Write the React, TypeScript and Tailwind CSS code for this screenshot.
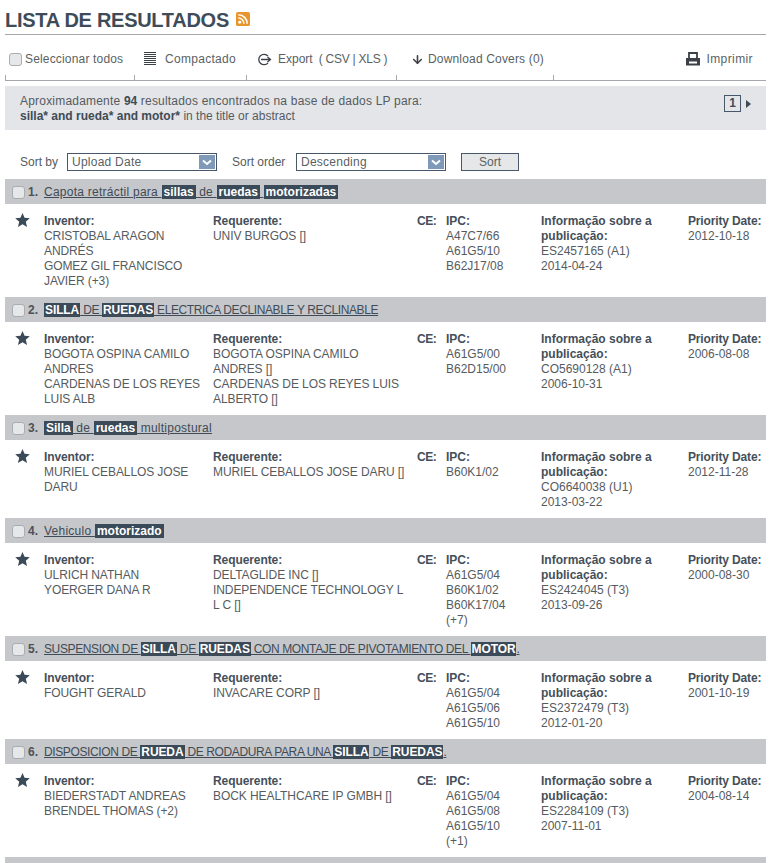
import React from "react";
import { ArrowDown } from "lucide-react";

const results = [
  {
    title: "Capota retráctil para |sillas| de |ruedas| |motorizadas|",
    caps: false,
    inventors: ["CRISTOBAL ARAGON", "ANDRÉS", "GOMEZ GIL FRANCISCO", "JAVIER (+3)"],
    applicants: ["UNIV BURGOS []"],
    ipc: ["A47C7/66", "A61G5/10", "B62J17/08"],
    pub: "ES2457165 (A1)",
    pubDate: "2014-04-24",
    priority: "2012-10-18",
  },
  {
    title: "|SILLA| DE |RUEDAS| ELECTRICA DECLINABLE Y RECLINABLE",
    caps: true,
    inventors: ["BOGOTA OSPINA CAMILO", "ANDRES", "CARDENAS DE LOS REYES", "LUIS ALB"],
    applicants: ["BOGOTA OSPINA CAMILO", "ANDRES []", "CARDENAS DE LOS REYES LUIS", "ALBERTO []"],
    ipc: ["A61G5/00", "B62D15/00"],
    pub: "CO5690128 (A1)",
    pubDate: "2006-10-31",
    priority: "2006-08-08",
  },
  {
    title: "|Silla| de |ruedas| multipostural",
    caps: false,
    inventors: ["MURIEL CEBALLOS JOSE", "DARU"],
    applicants: ["MURIEL CEBALLOS JOSE DARU []"],
    ipc: ["B60K1/02"],
    pub: "CO6640038 (U1)",
    pubDate: "2013-03-22",
    priority: "2012-11-28",
  },
  {
    title: "Vehiculo |motorizado|",
    caps: false,
    inventors: ["ULRICH NATHAN", "YOERGER DANA R"],
    applicants: ["DELTAGLIDE INC []", "INDEPENDENCE TECHNOLOGY L", "L C []"],
    ipc: ["A61G5/04", "B60K1/02", "B60K17/04", "(+7)"],
    pub: "ES2424045 (T3)",
    pubDate: "2013-09-26",
    priority: "2000-08-30",
  },
  {
    title: "SUSPENSION DE |SILLA| DE |RUEDAS| CON MONTAJE DE PIVOTAMIENTO DEL |MOTOR|.",
    caps: true,
    inventors: ["FOUGHT GERALD"],
    applicants: ["INVACARE CORP []"],
    ipc: ["A61G5/04", "A61G5/06", "A61G5/10"],
    pub: "ES2372479 (T3)",
    pubDate: "2012-01-20",
    priority: "2001-10-19",
  },
  {
    title: "DISPOSICION DE |RUEDA| DE RODADURA PARA UNA |SILLA| DE |RUEDAS|.",
    caps: true,
    inventors: ["BIEDERSTADT ANDREAS", "BRENDEL THOMAS (+2)"],
    applicants: ["BOCK HEALTHCARE IP GMBH []"],
    ipc: ["A61G5/04", "A61G5/08", "A61G5/10", "(+1)"],
    pub: "ES2284109 (T3)",
    pubDate: "2007-11-01",
    priority: "2004-08-14",
  },
];

const Check = () => (
  <span className="block w-[13px] h-[13px] rounded-[3px] border border-[#a9adb2] bg-[#e6e7e9]" />
);

const Select = ({ value, width }: { value: string; width: string }) => (
  <div className={`${width} h-[18px] border border-[#46586a] bg-white flex items-center justify-between pl-1 pr-px`}>
    <span className="text-[12px] text-[#5a5f64] tracking-[0.25px] pt-px">{value}</span>
    <span className="w-4 h-[14px] bg-[#7f9ab8] flex items-center justify-center">
      <svg width="10" height="7" viewBox="0 0 10 7">
        <path d="M1 1.5 L5 5 L9 1.5" fill="none" stroke="#fff" strokeWidth="2" />
      </svg>
    </span>
  </div>
);

const Label = ({ children }: { children: React.ReactNode }) => (
  <div className="font-bold text-[#454f59]">{children}</div>
);

export default function App() {
  return (
    <div className="h-[863px] overflow-hidden bg-white font-['Liberation_Sans',Arial,sans-serif] text-[12px] leading-[15px] text-[#565b60]">
      <div className="w-[761px] ml-[5px]">
        {/* Heading */}
        <div className="h-[35px] border-b border-[#a5a7aa] flex items-start pt-[9px] gap-[7px]">
          <h1 className="text-[20px] leading-[23px] font-bold text-[#3e4c59] tracking-[-0.28px]">LISTA DE RESULTADOS</h1>
          <svg width="14" height="14" viewBox="0 0 15 15" className="mt-[3px]">
            <rect width="15" height="15" rx="2" fill="#e8962c" />
            <circle cx="4" cy="11" r="1.6" fill="#fff" />
            <path d="M2.5 6.5 A6 6 0 0 1 8.5 12.5" fill="none" stroke="#fff" strokeWidth="1.7" />
            <path d="M2.5 3 A9.5 9.5 0 0 1 12 12.5" fill="none" stroke="#fff" strokeWidth="1.7" />
          </svg>
        </div>

        {/* Toolbar */}
        <div className="h-[40px] pt-[8px] flex items-center text-[#5a5f64] tracking-[0.17px]">
          <div className="w-[129px] flex items-center pl-[4px] gap-[3px]">
            <Check />
            <span>Seleccionar todos</span>
          </div>
          <div className="w-[112px] flex items-center pl-[10px] gap-[9px]">
            <svg width="12" height="14" viewBox="0 0 12 14">
              {[0, 2, 4, 6, 8, 10, 12].map((y) => (
                <rect key={y} x="0" y={y} width="12" height="1" fill="#3b4147" />
              ))}
            </svg>
            <span className="tracking-[0.3px]">Compactado</span>
          </div>
          <div className="w-[150px] flex items-center pl-[11px] gap-[6px] tracking-normal">
            <svg width="15" height="13" viewBox="0 0 15 13">
              <path d="M11 3.2 A5.2 5.2 0 1 0 11 9.8" fill="none" stroke="#3b4147" strokeWidth="1.3" />
              <path d="M4 6.5 H13 M10.5 4 L13.5 6.5 L10.5 9" fill="none" stroke="#3b4147" strokeWidth="1.3" />
            </svg>
            <span>Export</span>
            <span className="tracking-[-0.25px]">( CSV | XLS )</span>
          </div>
          <div className="w-[157px] flex items-center pl-[15px] gap-[4px]">
            <ArrowDown size={13} strokeWidth={3} className="text-[#3b4147]" />
            <span>Download Covers (0)</span>
          </div>
          <div className="flex-1 flex items-center justify-end pr-[13px] gap-[5px]">
            <svg width="16" height="14" viewBox="0 0 16 14">
              <path d="M4 6 V1 H12 V6" fill="none" stroke="#3b4147" strokeWidth="1.8" />
              <path d="M1 6 H15 V13.5 H1 Z M4 9.5 V11.5 H12 V9.5 Z" fill="#3b4147" fillRule="evenodd" />
            </svg>
            <span className="tracking-[0.4px]">Imprimir</span>
          </div>
        </div>
        <div className="h-[6px] flex border-b border-[#a5a7aa]">
          <div className="w-[129px] border-l border-[#a5a7aa]" />
          <div className="w-[112px] border-l border-[#a5a7aa]" />
          <div className="w-[150px] border-l border-[#a5a7aa]" />
          <div className="w-[157px] border-l border-[#a5a7aa]" />
          <div className="flex-1 border-l border-[#a5a7aa]" />
        </div>

        {/* Info box */}
        <div className="mt-[5px] h-[44px] bg-[#e3e5e8] pl-[15px] pr-[15px] pt-[8px] flex justify-between">
          <div>
            <div className="tracking-[0.2px]">
              Aproximadamente <b className="text-[#3f4b56] tracking-normal">94</b> resultados encontrados na base de dados LP para:
            </div>
            <div>
              <b className="text-[#3f4b56]">silla* and rueda* and motor*</b> in the title or abstract
            </div>
          </div>
          <div className="flex items-start gap-[5px] pt-px">
            <span className="w-[17px] h-[17px] border border-[#46586a] flex items-center justify-center font-bold text-[#3f4b56]">
              1
            </span>
            <svg width="5" height="8" viewBox="0 0 5 8" className="mt-[5px]">
              <path d="M0 0 L5 4 L0 8 Z" fill="#3f4b56" />
            </svg>
          </div>
        </div>

        {/* Sort row */}
        <div className="mt-[23px] h-[18px] flex items-center pl-[15px]">
          <span className="w-[47px]">Sort by</span>
          <Select value="Upload Date" width="w-[150px]" />
          <span className="ml-[15px] w-[64px]">Sort order</span>
          <Select value="Descending" width="w-[150px]" />
          <button className="ml-[15px] w-[58px] h-[18px] border border-[#46586a] bg-[#e6e7e9] text-[#5a5f64] text-[12px]">
            Sort
          </button>
        </div>

        {/* Results */}
        <div className="mt-[8px]">
          {results.map((r, i) => (
            <div key={i}>
              <div className="h-[25px] bg-[#c5c7ca] flex items-center pl-[7px] pt-[2px]">
                <Check />
                <span className="ml-[3px] w-[16px] font-bold text-[#4d5257]">{i + 1}.</span>
                <span className={`text-[#3f4b56] underline ${r.caps ? "tracking-[-0.38px]" : "tracking-[0.4px]"}`}>
                  {r.title.split("|").map((part, j) =>
                    j % 2 === 1 ? (
                      <span
                        key={j}
                        className={`bg-[#3b4a58] text-white font-bold ${r.caps ? "px-px tracking-[-0.1px]" : "px-[2px] tracking-normal"}`}
                      >
                        {part}
                      </span>
                    ) : (
                      <span key={j} className={r.caps ? "" : "tracking-[0.25px]"}>
                        {part}
                      </span>
                    )
                  )}
                </span>
              </div>
              <div className="flex pt-[10px] pb-[8px]">
                <div className="w-[39px] pl-[10px]">
                  <svg width="15" height="14" viewBox="0 0 16 15" className="-mt-px">
                    <path d="M8 0 L10.2 5.2 L15.8 5.7 L11.5 9.4 L12.9 15 L8 12 L3.1 15 L4.5 9.4 L0.2 5.7 L5.8 5.2 Z" fill="#3b4a58" />
                  </svg>
                </div>
                <div className="w-[169px] tracking-[-0.1px]">
                  <Label>Inventor:</Label>
                  {r.inventors.map((n) => (
                    <div key={n}>{n}</div>
                  ))}
                </div>
                <div className="w-[204px] tracking-[-0.08px]">
                  <Label>Requerente:</Label>
                  {r.applicants.map((n) => (
                    <div key={n}>{n}</div>
                  ))}
                </div>
                <div className="w-[29px] tracking-[-0.5px]">
                  <Label>CE:</Label>
                </div>
                <div className="w-[95px]">
                  <Label>IPC:</Label>
                  {r.ipc.map((n) => (
                    <div key={n}>{n}</div>
                  ))}
                </div>
                <div className="w-[147px]">
                  <Label>Informação sobre a</Label>
                  <Label>publicação:</Label>
                  <div>{r.pub}</div>
                  <div>{r.pubDate}</div>
                </div>
                <div className="flex-1 whitespace-nowrap">
                  <div className="tracking-[-0.15px]">
                    <Label>Priority Date:</Label>
                  </div>
                  <div>{r.priority}</div>
                </div>
              </div>
            </div>
          ))}
          <div className="h-[25px] bg-[#c5c7ca]" />
        </div>
      </div>
    </div>
  );
}
